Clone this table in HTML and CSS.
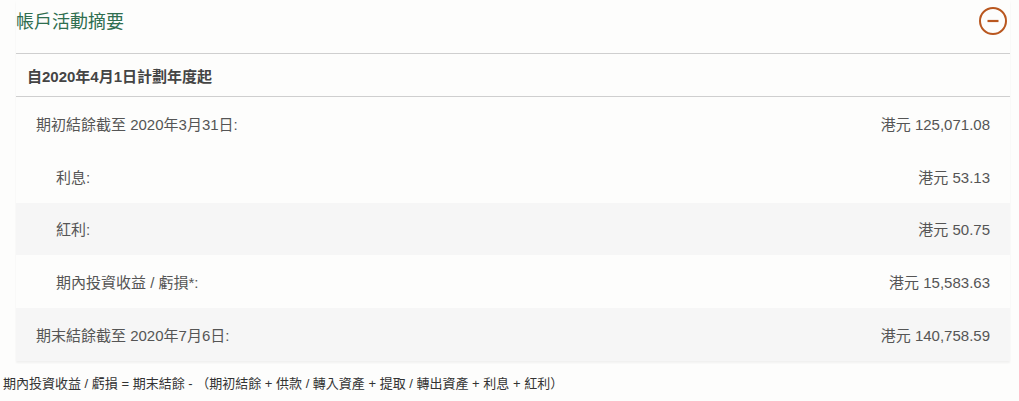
FILE: index.html
```html
<!DOCTYPE html>
<html lang="zh-Hant">
<head>
<meta charset="utf-8">
<link rel="stylesheet" href="styles.css">
</head>
<body>
<div class="panel">
  <div class="panel-head">
    <h2 class="title">帳戶活動摘要</h2>
    <svg class="toggle" width="30" height="30" viewBox="0 0 30 30" aria-hidden="true">
      <circle cx="15" cy="15" r="13" fill="none" stroke="#b9571f" stroke-width="2"/>
      <line x1="9.5" y1="15" x2="20.5" y2="15" stroke="#b9571f" stroke-width="2.2"/>
    </svg>
  </div>
  <div class="section-head">自2020年4月1日計劃年度起</div>
  <div class="rows">
    <div class="row"><span class="label">期初結餘截至 2020年3月31日:</span><span class="value">港元 125,071.08</span></div>
    <div class="row"><span class="label indent">利息:</span><span class="value">港元 53.13</span></div>
    <div class="row alt"><span class="label indent">紅利:</span><span class="value">港元 50.75</span></div>
    <div class="row"><span class="label indent">期內投資收益 / 虧損*:</span><span class="value">港元 15,583.63</span></div>
    <div class="row alt"><span class="label">期末結餘截至 2020年7月6日:</span><span class="value">港元 140,758.59</span></div>
  </div>
</div>
<p class="note">期內投資收益 / 虧損 = 期末結餘 - （期初結餘 + 供款 / 轉入資產 + 提取 / 轉出資產 + 利息 + 紅利）</p>
</body>
</html>
```

FILE: styles.css
```css
html, body {
  margin: 0;
  padding: 0;
  background: #fdfdfc;
  font-family: "Liberation Sans", Arial, "Noto Sans CJK TC", sans-serif;
  color: #555;
}

.panel {
  margin: 0 9px 0 16px;
  box-shadow: 0 2px 2px rgba(0, 0, 0, 0.05);
}

.panel-head {
  height: 53px;
  display: flex;
  align-items: center;
  justify-content: space-between;
  border-bottom: 1px solid #cfcfcf;
  padding-right: 1px;
}

.title {
  margin: 0 0 13px 0;
  font-weight: normal;
  font-size: 18px;
  color: #2f6e4f;
  font-family: "Liberation Sans", "Noto Sans CJK TC", sans-serif;
}

.toggle {
  margin-bottom: 12px;
  margin-right: 1px;
}

.section-head {
  height: 42px;
  display: flex;
  align-items: center;
  padding-left: 11px;
  font-weight: bold;
  font-size: 15px;
  color: #444;
  border-bottom: 1px solid #cfcfcf;
}

.rows {
  display: flex;
  flex-direction: column;
}

.row {
  height: 52.8px;
  display: flex;
  align-items: center;
  justify-content: space-between;
  padding: 0 20px;
  font-size: 15px;
  color: #555;
  background: #fdfdfc;
}

.row.alt {
  background: #f6f6f6;
}

.label.indent {
  padding-left: 20px;
}

.note {
  margin: 12px 0 0 3px;
  font-size: 13px;
  color: #333;
}
```
